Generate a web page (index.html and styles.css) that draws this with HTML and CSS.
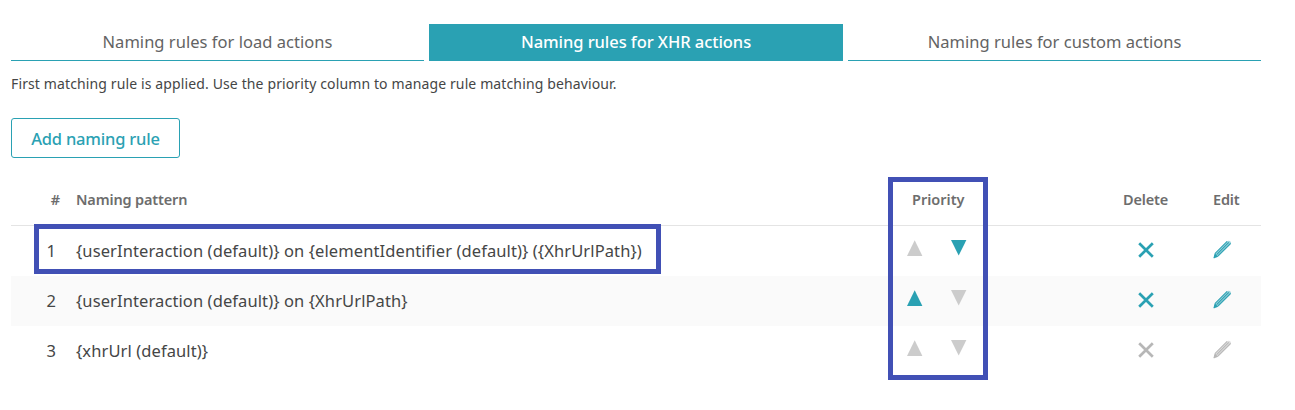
FILE: index.html
```html
<!DOCTYPE html>
<html lang="en">
<head>
<meta charset="utf-8">
<title>Naming rules</title>
<link rel="stylesheet" href="styles.css">
</head>
<body>
<svg class="defs" width="0" height="0">
  <symbol id="up" viewBox="0 0 16 16"><path d="M7.7 0.3 15.4 15.9H0z" fill="currentColor"/></symbol>
  <symbol id="down" viewBox="0 0 16 16"><path d="M0 .1h15.4L7.7 15.6z" fill="currentColor"/></symbol>
  <symbol id="cross" viewBox="0 0 16 16"><path d="M1.2 1.2l13.6 13.6M14.8 1.2 1.2 14.8" fill="none" stroke="currentColor" stroke-width="2.7"/></symbol>
  <symbol id="pencil" viewBox="0 0 20 20">
    <path d="M1 19.2 2.4 13.9 14.7 1.6Q16.7.2 18.3 1.5 19.7 3 18.3 5L6.1 17z" fill="currentColor" opacity=".45"/>
    <path d="M1 19.2 2.4 13.9 14.9 1.5M3.8 15.3 16.6 2.5M5.2 16.7 18.5 3.6" fill="none" stroke="currentColor" stroke-width="1.1"/>
    <path d="M.8 19.3 2.2 14.4 5.6 17.6z" fill="currentColor"/>
  </symbol>
</svg>
<main class="page">
  <nav class="tabs">
    <a class="tab">Naming rules for load actions</a>
    <a class="tab active">Naming rules for XHR actions</a>
    <a class="tab">Naming rules for custom actions</a>
  </nav>
  <p class="hint">First matching rule is applied. Use the priority column to manage rule matching behaviour.</p>
  <button class="add"><span>Add naming rule</span></button>
  <section class="table">
    <div class="row head">
      <span class="num">#</span><span class="pattern"><span>Naming pattern</span></span><span class="priority">Priority</span><span class="delete">Delete</span><span class="edit">Edit</span>
    </div>
    <div class="row">
      <span class="num">1</span><span class="pattern"><span>{userInteraction (default)} on {elementIdentifier (default)} ({XhrUrlPath})</span></span>
      <span class="priority"><svg class="tri off"><use href="#up"/></svg><svg class="tri"><use href="#down"/></svg></span>
      <span class="delete"><svg class="cross"><use href="#cross"/></svg></span><span class="edit"><svg class="pencil"><use href="#pencil"/></svg></span>
    </div>
    <div class="row alt">
      <span class="num">2</span><span class="pattern"><span>{userInteraction (default)} on {XhrUrlPath}</span></span>
      <span class="priority"><svg class="tri"><use href="#up"/></svg><svg class="tri off"><use href="#down"/></svg></span>
      <span class="delete"><svg class="cross"><use href="#cross"/></svg></span><span class="edit"><svg class="pencil"><use href="#pencil"/></svg></span>
    </div>
    <div class="row">
      <span class="num">3</span><span class="pattern"><span>{xhrUrl (default)}</span></span>
      <span class="priority"><svg class="tri off"><use href="#up"/></svg><svg class="tri off"><use href="#down"/></svg></span>
      <span class="delete"><svg class="cross dim"><use href="#cross"/></svg></span><span class="edit"><svg class="pencil dim"><use href="#pencil"/></svg></span>
    </div>
    <div class="mark mark-rule"></div>
    <div class="mark mark-priority"></div>
  </section>
</main>
</body>
</html>
```
FILE: styles.css
```css
* { box-sizing: border-box; }
body { margin: 0; min-height: 410px; background: #fff; color: #454646; font-family: "Noto Sans", sans-serif; font-size: 16.5px; letter-spacing: .1px; }
.defs { position: absolute; }
.page { width: 1261px; min-height: 410px; padding: 24px 0 0 11px; }
.tabs { display: grid; grid-template-columns: 413px 414px 413px; gap: 5px; height: 37px; }
.tab { display: flex; align-items: center; justify-content: center; padding-bottom: 2px; border-bottom: 1px solid #2aa1b3; color: #636363; letter-spacing: .03px; }
.tab.active { background: #2aa1b3; color: #fff; font-weight: 500; letter-spacing: -.06px; }
.hint { margin: 12px 0 0; height: 22px; line-height: 22px; font-size: 14px; letter-spacing: .125px; white-space: nowrap; }
.add { display: flex; align-items: center; justify-content: center; margin: 23px 0 0; padding: 0; width: 169px; height: 40px; border: 1px solid #2aa1b3; border-radius: 3px; background: #fff; color: #2aa1b3; font: 500 16.5px "Noto Sans", sans-serif; letter-spacing: -.2px; }
.table { position: relative; margin-top: 17px; }
.row { display: grid; grid-template-columns: 45px 797px 120px 225px 63px; height: 50px; align-items: center; white-space: nowrap; }
.row.head { height: 51px; padding-bottom: 2px; border-bottom: 1px solid #e4e4e4; color: #6d6d6d; font-size: 14.5px; font-weight: 600; letter-spacing: -.15px; }
.row.alt { background: #fafafa; }
.num { padding-bottom: 2px; text-align: right; }
.head .num { padding-bottom: 0; margin-right: -4px; }
.pattern { padding: 0 0 2px 20px; }
.head .pattern { padding-bottom: 0; }
.priority { display: flex; gap: 28px; padding-left: 54px; }
.head .priority { padding-left: 59px; letter-spacing: 0; }
.delete { display: flex; padding-left: 165px; }
.head .delete { padding-left: 150px; }
.edit { display: flex; padding-left: 15px; }
.tri { width: 16px; height: 16px; margin-bottom: 6px; color: #2aa1b3; }
.tri.off { color: #ccc; }
.cross { width: 16px; height: 16px; margin-bottom: 3px; color: #2aa1b3; }
.pencil { width: 19px; height: 19px; margin-bottom: 4px; color: #2aa1b3; }
.cross.dim, .pencil.dim { color: #b7b7b7; }
.mark { position: absolute; border: 5px solid #4150b5; }
.mark-rule { left: 23px; top: 49px; width: 627px; height: 50px; }
.mark-priority { left: 877px; top: 2px; width: 100px; height: 203px; }
```
